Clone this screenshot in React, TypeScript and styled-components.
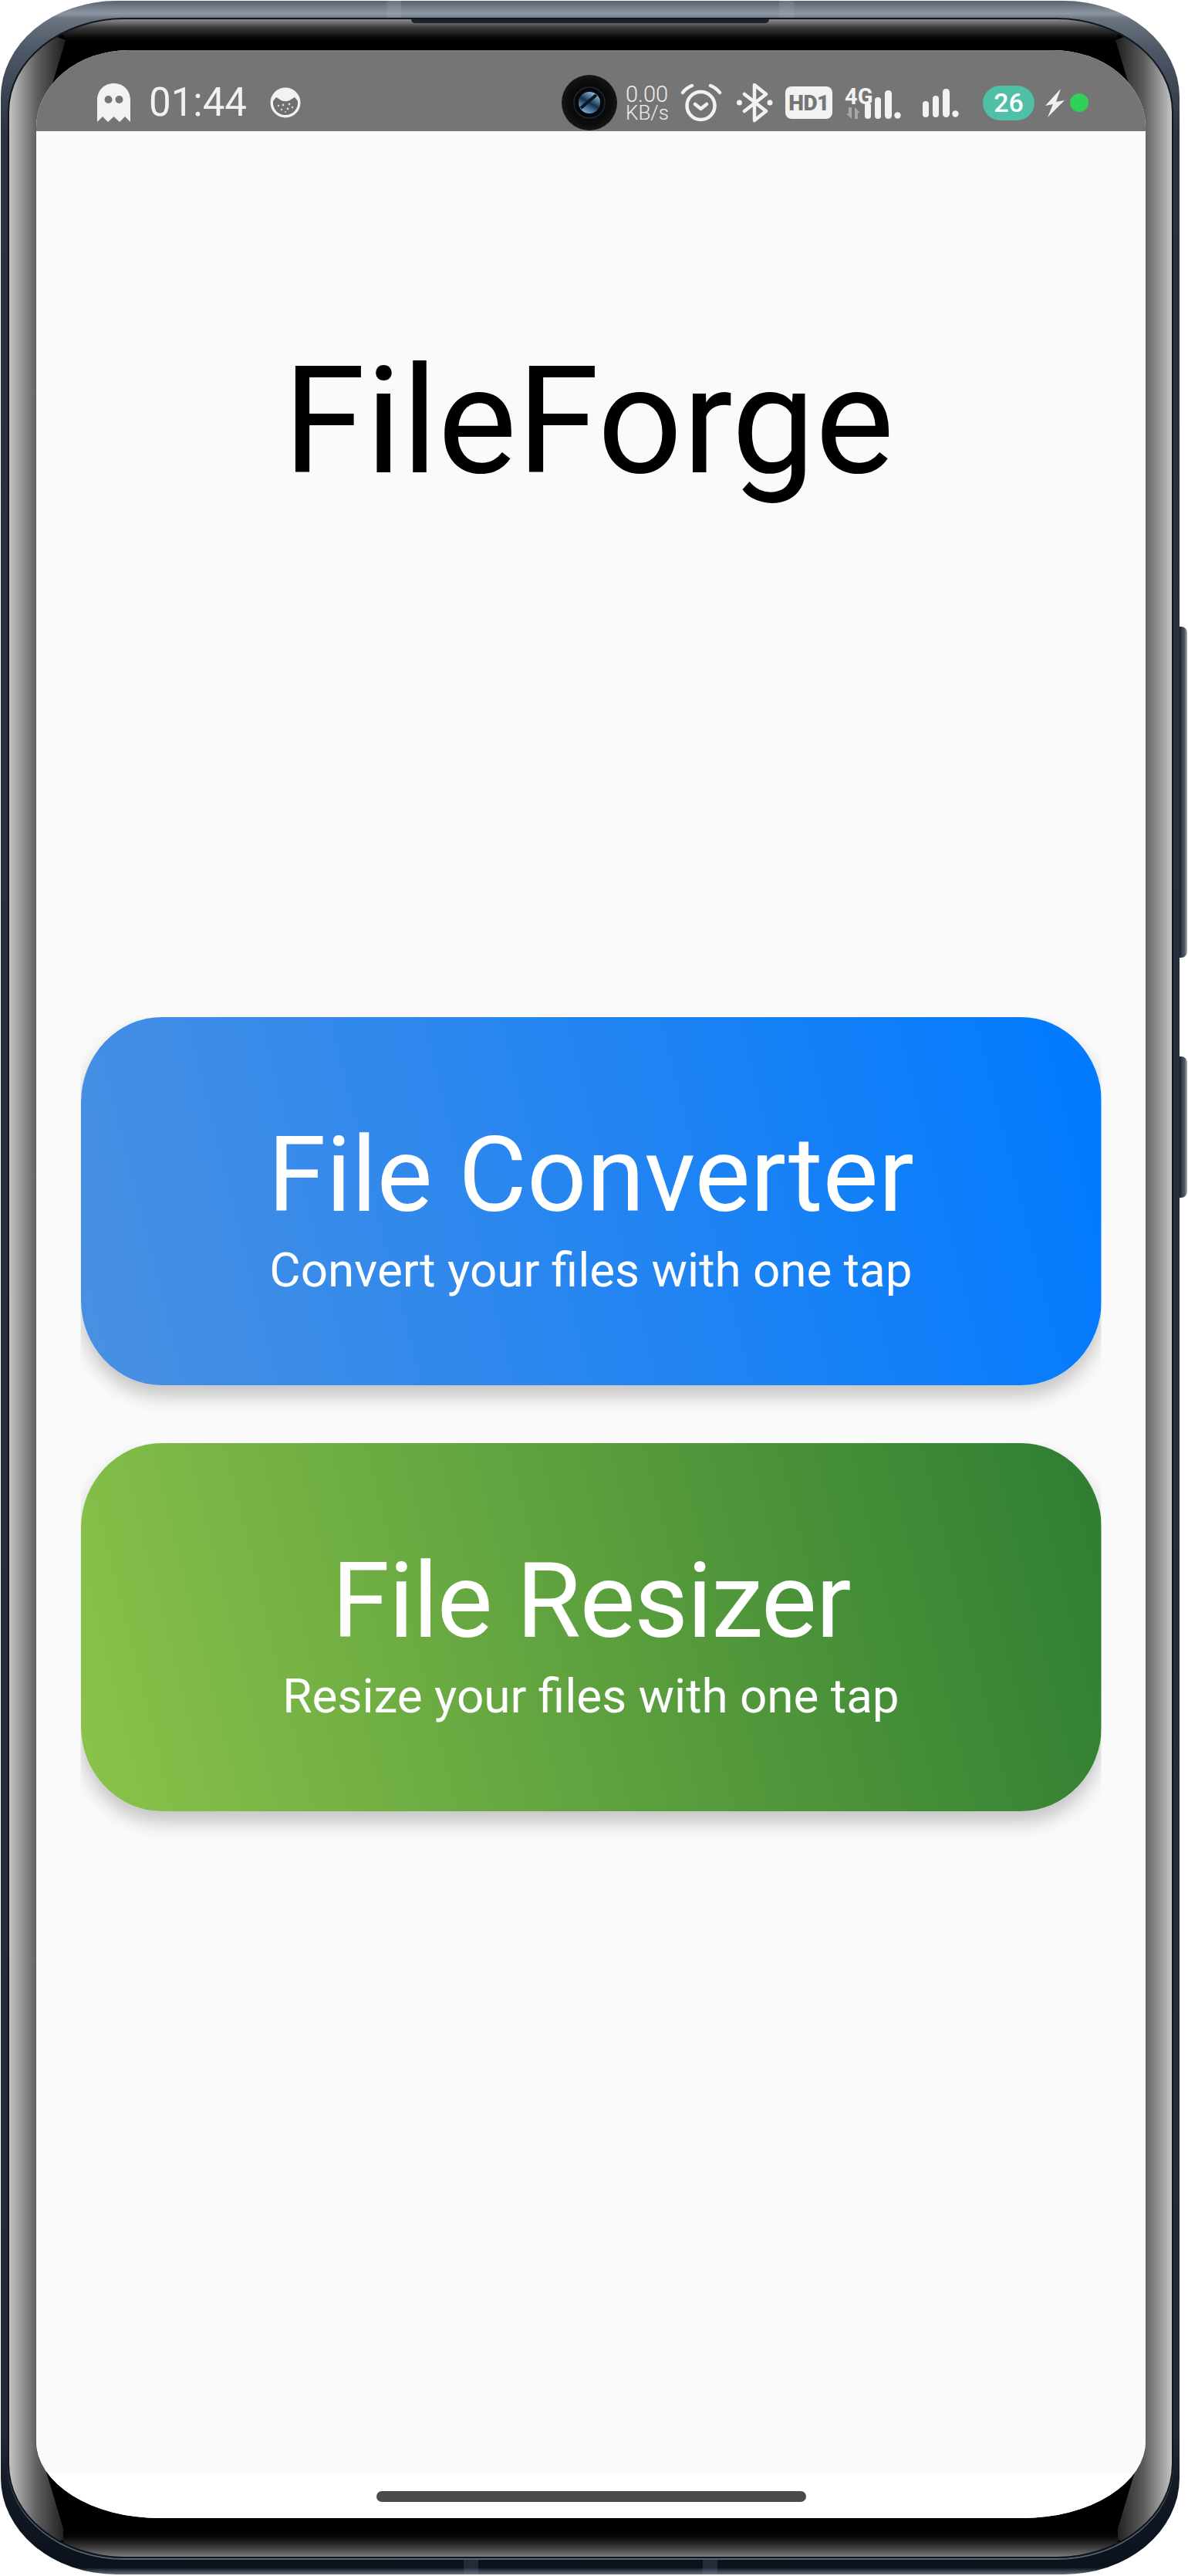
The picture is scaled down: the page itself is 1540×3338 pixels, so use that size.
import React from 'react';
import styled, { createGlobalStyle } from 'styled-components';

const GlobalStyle = createGlobalStyle`
  html, body {
    margin: 0;
    padding: 0;
    background: #fff;
    font-family: Roboto, 'Noto Sans', sans-serif;
  }
`;

const Page = styled.div`
  width: 1540px;
  height: 3338px;
  padding: 1px 0 0 1px;
  box-sizing: border-box;
  overflow: hidden;
`;

const Frame = styled.div`
  position: relative;
  width: 1528px;
  height: 3335px;
  box-sizing: border-box;
  display: flex;
  padding: 24px 10px 23px 11px;
  border-radius: 150px / 125px;
  background: linear-gradient(
    180deg,
    #59636f 0,
    #76808d 9px,
    #8d96a2 17px,
    #6b7481 23px,
    #4f5967 60px,
    #2b3340 170px,
    #222a37 3150px,
    #121925 3230px,
    #0b121c 3326px,
    #667080 3335px
  );
`;

const SideButton = styled.div<{ $top: number; $height: number }>`
  position: absolute;
  left: 100%;
  top: ${(p) => p.$top}px;
  width: 10px;
  height: ${(p) => p.$height}px;
  border-radius: 0 8px 8px 0;
  background: linear-gradient(90deg, #141b26 0, #3b4453 35%, #4f5867 65%, #a9b0b9 100%);
`;

const AntennaBand = styled.div<{ $left: number; $bottom?: boolean }>`
  position: absolute;
  left: ${(p) => p.$left}px;
  width: 19px;
  height: 23px;
  ${(p) => (p.$bottom ? 'bottom: 0;' : 'top: 0;')}
  background: ${(p) => (p.$bottom ? 'rgba(120, 132, 150, 0.22)' : 'rgba(170, 178, 190, 0.2)')};
`;

const Speaker = styled.div`
  position: absolute;
  z-index: 2;
  top: 24px;
  left: 532px;
  width: 464px;
  height: 5px;
  border-radius: 0 0 6px 6px;
  background: #1d232c;
`;

const Bezel = styled.div`
  position: relative;
  flex: 1;
  display: flex;
  box-sizing: border-box;
  padding: 40px 34px 50px 35px;
  border-radius: 150px / 120px;
  background: #000;
  overflow: hidden;

  &::before,
  &::after {
    content: '';
    position: absolute;
    left: 70px;
    right: 70px;
  }

  &::before {
    top: 0;
    height: 30px;
    background: linear-gradient(180deg, #8d8d8d 0, #3a3a3a 11px, #060606 24px, #000 30px);
  }

  &::after {
    bottom: 0;
    height: 34px;
    background: linear-gradient(0deg, #7c7c7c 0, #3a3a3a 12px, #060606 26px, #000 34px);
  }
`;

const BezelRim = styled.div`
  position: absolute;
  inset: 22px 8px 21px 9px;
  border-radius: 152px / 122px;
  border: 2px solid #10161f;
  box-shadow: 0 2px 0 #59626f;
  pointer-events: none;
`;

const SideGlare = styled.div<{ $side: 'left' | 'right' }>`
  position: absolute;
  top: 0;
  bottom: 0;
  ${(p) => p.$side}: 0;
  width: 80px;
  background: linear-gradient(90deg, #c4c4c4 0, #5e5e5e 36px, #1c1c1c 74px);
  clip-path: polygon(
    0 0,
    73px 27px,
    36px 150px,
    36px calc(100% - 150px),
    74px calc(100% - 23px),
    0 100%
  );
  ${(p) => (p.$side === 'right' ? 'transform: scaleX(-1);' : '')}
`;

const Screen = styled.div`
  position: relative;
  z-index: 1;
  flex: 1;
  display: flex;
  flex-direction: column;
  overflow: hidden;
  border-radius: 120px 120px 160px 160px / 100px 100px 100px 100px;
  background: #fff;
`;

const StatusBar = styled.div`
  height: 105px;
  box-sizing: border-box;
  flex: none;
  display: flex;
  align-items: center;
  justify-content: space-between;
  padding: 31px 74px 0 78px;
  background: #757575;
  color: #f2f2f2;
`;

const StatusGroup = styled.div`
  display: flex;
  align-items: center;
`;

const Glyph = styled.svg<{ $ml?: number }>`
  display: block;
  flex: none;
  margin-left: ${(p) => p.$ml ?? 0}px;
`;

const Clock = styled.span`
  margin-left: 23px;
  font-size: 51px;
  line-height: 50px;
  font-family: Roboto, sans-serif;
`;

const Speed = styled.div`
  margin-left: 11px;
  width: 58px;
  display: flex;
  flex-direction: column;
  font-family: Roboto, sans-serif;
  font-weight: 300;
  color: #eee;
`;

const SpeedValue = styled.span`
  font-size: 29px;
  line-height: 26px;
`;

const SpeedUnit = styled.span`
  font-size: 26px;
  line-height: 22px;
`;

const HdBadge = styled.div`
  margin-left: 16px;
  width: 61px;
  height: 42px;
  display: flex;
  align-items: center;
  justify-content: center;
  border-radius: 8px;
  background: #f2f2f2;
  color: #757575;
  font-size: 28px;
  font-weight: 900;
  letter-spacing: -0.5px;
`;

const Network = styled.div`
  margin-left: 16px;
  display: flex;
  align-items: flex-end;
`;

const NetworkType = styled.div`
  display: flex;
  flex-direction: column;
  width: 36px;
`;

const NetworkLabel = styled.span`
  font-size: 29px;
  line-height: 27px;
  font-weight: 700;
  white-space: nowrap;
`;

const BatteryPill = styled.div`
  margin-left: 31px;
  width: 67px;
  height: 45px;
  display: flex;
  align-items: center;
  justify-content: center;
  border-radius: 23px;
  background: #4fbfa5;
  color: #fff;
  font-size: 34px;
  font-weight: 500;
`;

const GreenDot = styled.div`
  margin-left: 7px;
  width: 24px;
  height: 24px;
  border-radius: 50%;
  background: #2fd158;
`;

const Content = styled.main`
  flex: 1;
  display: flex;
  flex-direction: column;
  align-items: center;
  background: #fafafa;
  padding-top: 264px;
`;

const AppTitle = styled.h1`
  margin: 0 6px 660px 0;
  font-family: Roboto, sans-serif;
  font-weight: 400;
  font-size: 193px;
  line-height: 224px;
  color: #000;
`;

const ActionList = styled.div`
  display: flex;
  flex-direction: column;
  gap: 75px;
`;

const ActionCard = styled.div<{ $from: string; $to: string }>`
  width: 1323px;
  height: 477px;
  box-sizing: border-box;
  display: flex;
  flex-direction: column;
  align-items: center;
  padding-top: 130px;
  border-radius: 105px / 110px;
  background: linear-gradient(76deg, ${(p) => p.$from}, ${(p) => p.$to});
  box-shadow: 0 14px 24px rgba(0, 0, 0, 0.22);
  clip-path: inset(0 0 -60px 0);
  color: #fff;
`;

const ActionTitle = styled.div<{ $tracking?: number }>`
  font-size: 136px;
  line-height: 150px;
  letter-spacing: ${(p) => p.$tracking ?? 0}px;
`;

const ActionHint = styled.div`
  margin-top: 12px;
  font-size: 62px;
  line-height: 72px;
`;

const NavArea = styled.div`
  height: 58px;
  flex: none;
  display: flex;
  justify-content: center;
  background: #fff;
  padding-top: 23px;
  box-sizing: border-box;
`;

const HomeIndicator = styled.div`
  width: 557px;
  height: 14px;
  border-radius: 7px;
  background: #4a4a4a;
`;

const Ghost = () => (
  <Glyph width="45" height="50" viewBox="0 0 45 50">
    <path
      d="M22.5 0C10 0 1 9 1 22v28l7-7 7 7 7.500-7 7.500 7 7-7 7 7V22C44 9 35 0 22.500 0Z"
      fill="#f2f2f2"
    />
    <circle cx="15.500" cy="21" r="5" fill="#757575" />
    <circle cx="29.500" cy="21" r="5" fill="#757575" />
  </Glyph>
);

const CatBadge = () => (
  <Glyph $ml={30} width="40" height="40" viewBox="0 0 40 40">
    <circle cx="20" cy="20" r="19.500" fill="#f2f2f2" />
    <path
      d="M4 18l4-5 5 3c3 3 11 3 14 0l5-3 4 5c1 10-6 18-16 18S3 28 4 18Z"
      fill="#6f6f6f"
    />
    <g fill="#d8d8d8">
      <circle cx="11" cy="24" r="1.200" />
      <circle cx="17" cy="23" r="1.400" />
      <circle cx="25" cy="22" r="1.400" />
      <circle cx="29" cy="26" r="1.200" />
      <circle cx="15" cy="29" r="1.200" />
      <circle cx="23" cy="28" r="1.400" />
      <circle cx="20" cy="32" r="1" />
    </g>
  </Glyph>
);

const Camera = () => (
  <Glyph width="72" height="72" viewBox="0 0 72 72">
    <defs>
      <radialGradient id="camBody" cx="0.5" cy="0.5" r="0.5">
        <stop offset="0" stopColor="#000" />
        <stop offset="0.8" stopColor="#0d0d0d" />
        <stop offset="1" stopColor="#161616" />
      </radialGradient>
      <linearGradient id="camGlass" x1="0.8" y1="0" x2="0.2" y2="1">
        <stop offset="0" stopColor="#a9d4f5" />
        <stop offset="0.5" stopColor="#16314f" />
        <stop offset="1" stopColor="#8fc0ea" />
      </linearGradient>
    </defs>
    <circle cx="36" cy="36" r="36" fill="url(#camBody)" />
    <circle cx="36" cy="36" r="20" fill="#06080c" stroke="#1e2630" strokeWidth="1.500" />
    <circle cx="36" cy="36" r="14" fill="url(#camGlass)" />
    <path d="M25 43 45 26" stroke="#0c1622" strokeWidth="4" />
  </Glyph>
);

const Alarm = () => (
  <Glyph $ml={13} width="54" height="50" viewBox="0 0 54 50" fill="none" stroke="#f2f2f2" strokeLinecap="round">
    <circle cx="26.500" cy="29" r="18" strokeWidth="4.500" />
    <path d="M19 27l7.500 6 7.500-6" strokeWidth="4.500" strokeLinejoin="round" />
    <path d="M3 12C6 8 10 5 15 3" strokeWidth="4.500" />
    <path d="M51 12c-3-4-7-7-12-9" strokeWidth="4.500" />
  </Glyph>
);

const Bluetooth = () => (
  <Glyph $ml={19} width="47" height="52" viewBox="0 0 47 52">
    <path
      d="M10 15 38 37 23 49V3L38 15 10 37"
      fill="none"
      stroke="#f2f2f2"
      strokeWidth="4.500"
      strokeLinejoin="round"
      strokeLinecap="round"
    />
    <circle cx="3.500" cy="26" r="3.500" fill="#f2f2f2" />
    <circle cx="43" cy="26" r="3.500" fill="#f2f2f2" />
  </Glyph>
);

const SignalBars = ({ ml }: { ml: number }) => (
  <Glyph $ml={ml} width="47" height="37" viewBox="0 0 47 37" fill="#f2f2f2">
    <rect x="0" y="16" width="8" height="21" rx="4" />
    <rect x="13" y="9" width="8" height="28" rx="4" />
    <rect x="26" y="0" width="9" height="37" rx="4.500" />
    <circle cx="42.500" cy="32.500" r="4.200" />
  </Glyph>
);

const DataArrows = () => (
  <Glyph width="22" height="15" viewBox="0 0 22 15" fill="#a8a8a8">
    <path d="M9 0v15L2 8h3V0Z" />
    <path d="M13 15V0l7 7h-3v8Z" />
  </Glyph>
);

const Bolt = () => (
  <Glyph $ml={14} width="25" height="37" viewBox="0 0 25 37">
    <path d="M20 0 0 22l10-2-7 17 22-22-11 2Z" fill="#f0f0f0" />
  </Glyph>
);

export default function App() {
  return (
    <Page>
      <GlobalStyle />
      <Frame>
        <AntennaBand $left={500} />
        <AntennaBand $left={1009} />
        <AntennaBand $left={600} $bottom />
        <AntennaBand $left={910} $bottom />
        <Speaker />
        <BezelRim />
        <Bezel>
          <SideGlare $side="left" />
          <SideGlare $side="right" />
          <Screen>
            <StatusBar>
              <StatusGroup>
                <Ghost />
                <Clock>01:44</Clock>
                <CatBadge />
              </StatusGroup>
              <StatusGroup>
                <Camera />
                <Speed>
                  <SpeedValue>0.00</SpeedValue>
                  <SpeedUnit>KB/s</SpeedUnit>
                </Speed>
                <Alarm />
                <Bluetooth />
                <HdBadge>HD1</HdBadge>
                <Network>
                  <NetworkType>
                    <NetworkLabel>4G</NetworkLabel>
                    <DataArrows />
                  </NetworkType>
                  <SignalBars ml={-10} />
                </Network>
                <SignalBars ml={28} />
                <BatteryPill>26</BatteryPill>
                <Bolt />
                <GreenDot />
              </StatusGroup>
            </StatusBar>
            <Content>
              <AppTitle>FileForge</AppTitle>
              <ActionList>
                <ActionCard $from="#4a90e2" $to="#007aff">
                  <ActionTitle>File Converter</ActionTitle>
                  <ActionHint>Convert your files with one tap</ActionHint>
                </ActionCard>
                <ActionCard $from="#8bc34a" $to="#2e7d32">
                  <ActionTitle $tracking={-1.6}>File Resizer</ActionTitle>
                  <ActionHint>Resize your files with one tap</ActionHint>
                </ActionCard>
              </ActionList>
            </Content>
            <NavArea>
              <HomeIndicator />
            </NavArea>
          </Screen>
        </Bezel>
        <SideButton $top={811} $height={429} />
        <SideButton $top={1368} $height={183} />
      </Frame>
    </Page>
  );
}
